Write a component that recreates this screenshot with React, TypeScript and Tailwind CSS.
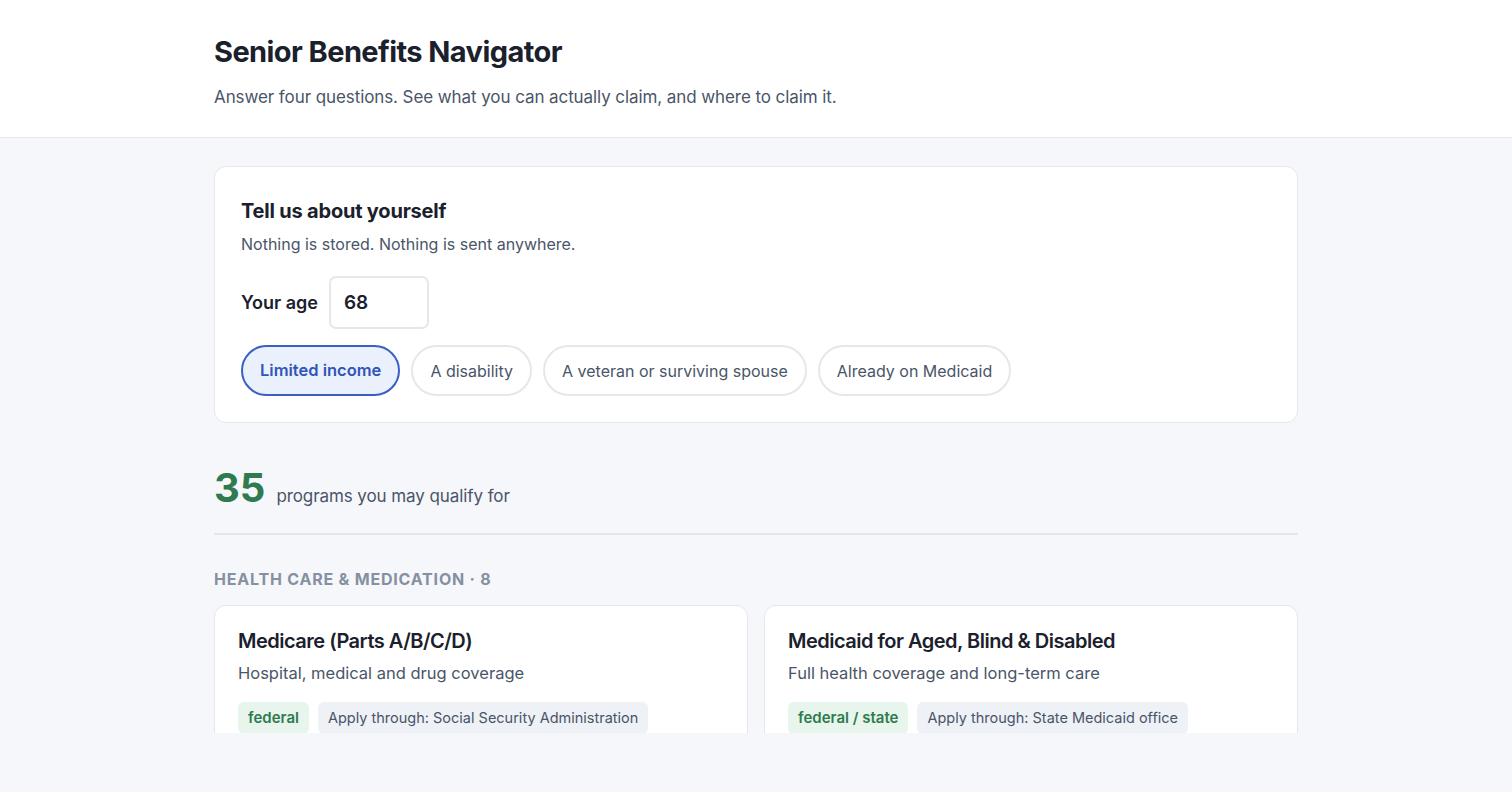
import { useState } from "react";

const situations = [
  "Limited income",
  "A disability",
  "A veteran or surviving spouse",
  "Already on Medicaid",
];

const programs = [
  {
    name: "Medicare (Parts A/B/C/D)",
    blurb: "Hospital, medical and drug coverage",
    level: "federal",
    agency: "Social Security Administration",
  },
  {
    name: "Medicaid for Aged, Blind & Disabled",
    blurb: "Full health coverage and long-term care",
    level: "federal / state",
    agency: "State Medicaid office",
  },
];

export default function App() {
  const [age, setAge] = useState("68");
  const [picked, setPicked] = useState<string[]>(["Limited income"]);

  const toggle = (s: string) =>
    setPicked((p) => (p.includes(s) ? p.filter((x) => x !== s) : [...p, s]));

  return (
    <div className="min-h-screen bg-[#f6f7fa] font-['Inter',sans-serif] text-[#1a202c]">
      <div className="h-[733px] overflow-hidden">
        {/* HEADER */}
        <header className="bg-white border-b border-[#e4e7ec]">
          <div className="w-[1084px] mx-auto pt-[33px] pb-[28px]">
            <h1 className="text-[29px] leading-[38px] font-bold tracking-[-0.02em] text-[#1a202c]">
              Senior Benefits Navigator
            </h1>
            <p className="mt-[14px] text-[17px] leading-[24px] tracking-[-0.005em] text-[#4a5568]">
              Answer four questions. See what you can actually claim, and where to claim it.
            </p>
          </div>
        </header>

        <main className="w-[1084px] mx-auto pt-[28px]">
          {/* QUESTIONS */}
          <section className="bg-white border border-[#e4e7ec] rounded-[12px] px-[26px] pt-[30px] pb-[26px]">
            <h2 className="text-[20px] leading-[28px] font-bold tracking-[-0.01em]">Tell us about yourself</h2>
            <p className="mt-[7px] text-[16px] leading-[24px] text-[#4a5568]">
              Nothing is stored. Nothing is sent anywhere.
            </p>
            <div className="mt-[20px] flex items-center gap-[11px]">
              <label className="text-[18px] font-semibold">Your age</label>
              <input
                value={age}
                onChange={(e) => setAge(e.target.value)}
                className="w-[100px] h-[53px] px-[13px] rounded-[7px] border-2 border-[#e4e7ec] text-[19px] font-semibold text-[#1a202c] outline-none"
              />
            </div>
            <div className="mt-[16px] flex gap-[11px]">
              {situations.map((s) => {
                const on = picked.includes(s);
                return (
                  <button
                    key={s}
                    onClick={() => toggle(s)}
                    className={
                      on
                        ? "h-[51px] px-[17px] rounded-full border-2 border-[#3a5fc4] bg-[#ebf1fc] text-[16.5px] font-semibold text-[#2f56b8]"
                        : "h-[51px] px-[17px] rounded-full border-2 border-[#e4e7ec] bg-white text-[16px] text-[#4a5568]"
                    }
                  >
                    {s}
                  </button>
                );
              })}
            </div>
          </section>

          {/* RESULTS */}
          <div className="mt-[41px] flex items-baseline gap-[11px] pb-[21px] border-b-2 border-[#e2e5ea]">
            <span className="text-[40px] leading-[48px] font-bold text-[#2f7a4f]">35</span>
            <span className="text-[17px] tracking-[-0.005em] text-[#4a5568]">programs you may qualify for</span>
          </div>

          <h3 className="mt-[32px] text-[16px] leading-[24px] font-bold uppercase tracking-[0.05em] text-[#8590a2]">
            Health Care &amp; Medication · 8
          </h3>

          <div className="mt-[14px] grid grid-cols-2 gap-[16px]">
            {programs.map((p) => (
              <article key={p.name} className="bg-white border border-[#e4e7ec] rounded-[12px] px-[23px] pt-[21px] pb-[24px]">
                <h4 className="text-[20px] leading-[28px] font-semibold tracking-[-0.025em]">{p.name}</h4>
                <p className="mt-[6px] text-[16.5px] leading-[24px] text-[#4a5568]">{p.blurb}</p>
                <div className="mt-[17px] flex gap-[9px]">
                  <span className="px-[10px] py-[6px] rounded-[6px] bg-[#e8f5ec] text-[15px] leading-[20px] font-semibold text-[#2f7a4f]">
                    {p.level}
                  </span>
                  <span className="px-[10px] py-[6px] rounded-[6px] bg-[#eef1f6] text-[14.5px] leading-[20px] text-[#4a5568]">
                    Apply through: {p.agency}
                  </span>
                </div>
              </article>
            ))}
          </div>
        </main>
      </div>
    </div>
  );
}
